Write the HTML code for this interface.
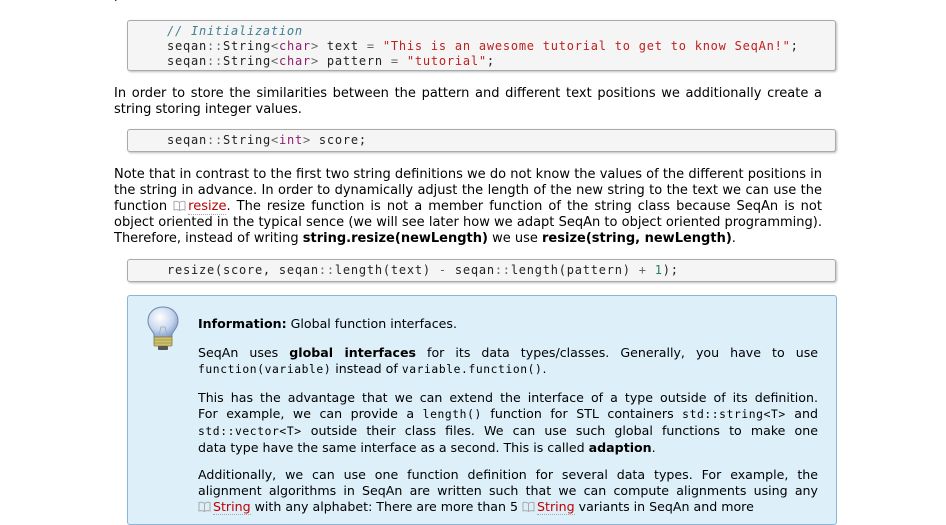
<!DOCTYPE html>
<html><head><meta charset="utf-8"><style>
body{margin:0;width:946px;height:510px;overflow:hidden;background:#fff;font-family:"DejaVu Sans",sans-serif;font-size:13px;color:#000;position:relative}
p{margin:0;position:absolute;left:114px;width:708px;line-height:16px;text-align:justify}
.code{position:absolute;left:127px;width:709px;background:#f5f5f5;border:1px solid #aaa;border-radius:3px;box-shadow:1px 1px 2px #bbb;font-family:"DejaVu Sans Mono",monospace;font-size:12px;letter-spacing:0.77px;line-height:15px;padding-left:39px;box-sizing:border-box;white-space:pre;color:#222}
.cm{color:#408090;font-style:italic}.k{color:#902070}.s{color:#c02020}.o{color:#666}.n{color:#208050}
.lnk{color:#c00000;border-bottom:1px dotted #aaa}
.bk{display:inline-block;width:13px;height:11px;vertical-align:-1px;margin-right:2px}
.info{position:absolute;left:127px;top:295px;width:710px;height:230px;background:#ddeff9;border:1px solid #8ab4d8;border-radius:3px;box-sizing:border-box}
.ip{left:198px;width:620px;font-size:12.6px}
.ip span.l{display:block;white-space:nowrap;text-align:justify;text-align-last:justify}
.ip span.e{display:block;white-space:nowrap}
tt{font-family:"DejaVu Sans Mono",monospace;font-size:11.3px;letter-spacing:0.6px}
</style></head><body>
<p style="top:-13px">pattern.</p>
<div class="code" style="top:20px;height:51px;padding-top:3px"><span class="cm">// Initialization</span>
seqan<span class="o">::</span>String<span class="o">&lt;</span><span class="k">char</span><span class="o">&gt;</span> text <span class="o">=</span> <span class="s">"This is an awesome tutorial to get to know SeqAn!"</span>;
seqan<span class="o">::</span>String<span class="o">&lt;</span><span class="k">char</span><span class="o">&gt;</span> pattern <span class="o">=</span> <span class="s">"tutorial"</span>;</div>
<p style="top:86px">In order to store the similarities between the pattern and different text positions we additionally create a string storing integer values.</p>
<div class="code" style="top:129px;height:23px;padding-top:3px">seqan<span class="o">::</span>String<span class="o">&lt;</span><span class="k">int</span><span class="o">&gt;</span> score;</div>
<p style="top:167px">Note that in contrast to the first two string definitions we do not know the values of the different positions in the string in advance. In order to dynamically adjust the length of the new string to the text we can use the function <svg class="bk" viewBox="0 0 13 11"><path d="M6.5 2.5C5 1 3 1 1 1.5V10C3 9.5 5 9.5 6.5 10.5C8 9.5 10 9.5 12 10V1.5C10 1 8 1 6.5 2.5V10.5" fill="none" stroke="#aaa"/></svg><span class="lnk">resize</span>. The resize function is not a member function of the string class because SeqAn is not object oriented in the typical sence (we will see later how we adapt SeqAn to object oriented programming). Therefore, instead of writing <b>string.resize(newLength)</b> we use <b>resize(string, newLength)</b>.</p>
<div class="code" style="top:259px;height:23px;padding-top:3px">resize(score, seqan<span class="o">::</span>length(text) <span class="o">-</span> seqan<span class="o">::</span>length(pattern) <span class="o">+</span> <span class="n">1</span>);</div>
<div class="info">
<svg style="position:absolute;left:17px;top:9px" width="36" height="50" viewBox="0 0 36 50"><defs><radialGradient id="g" cx=".4" cy=".35" r=".7"><stop offset="0" stop-color="#fff"/><stop offset=".6" stop-color="#c8d8ee"/><stop offset="1" stop-color="#7f9cc8"/></radialGradient></defs><path d="M18 2C9 2 3 8 3 16c0 6 4 9 6 13v3h18v-3c2-4 6-7 6-13C33 8 27 2 18 2z" fill="url(#g)" stroke="#7088aa"/><path d="M14 30l2-8h4l2 8" fill="none" stroke="#a0a8b0" stroke-width=".8"/><rect x="9" y="32" width="18" height="9" rx="1" fill="#cfc070" stroke="#8a7a30" stroke-width=".8"/><path d="M9 35h18M9 38h18" stroke="#8a7a30" stroke-width=".6"/><rect x="13" y="41" width="10" height="4" rx="1" fill="#555"/></svg>
</div>
<p class="ip" style="top:316px"><b>Information:</b> Global function interfaces.</p>
<p class="ip" style="top:345px"><span class="l">SeqAn uses <b>global interfaces</b> for its data types/classes. Generally, you have to use</span><span class="e"><tt>function(variable)</tt> instead of <tt>variable.function()</tt>.</span></p>
<p class="ip" style="top:390px"><span class="l">This has the advantage that we can extend the interface of a type outside of its definition.</span><span class="l">For example, we can provide a <tt>length()</tt> function for STL containers <tt>std::string&lt;T&gt;</tt> and</span><span class="l"><tt>std::vector&lt;T&gt;</tt> outside their class files. We can use such global functions to make one</span><span class="e">data type have the same interface as a second. This is called <b>adaption</b>.</span></p>
<p class="ip" style="top:467px"><span class="l">Additionally, we can use one function definition for several data types. For example, the</span><span class="l">alignment algorithms in SeqAn are written such that we can compute alignments using any</span><span class="e"><svg class="bk" viewBox="0 0 13 11"><path d="M6.5 2.5C5 1 3 1 1 1.5V10C3 9.5 5 9.5 6.5 10.5C8 9.5 10 9.5 12 10V1.5C10 1 8 1 6.5 2.5V10.5" fill="none" stroke="#aaa"/></svg><span class="lnk">String</span> with any alphabet: There are more than 5 <svg class="bk" viewBox="0 0 13 11"><path d="M6.5 2.5C5 1 3 1 1 1.5V10C3 9.5 5 9.5 6.5 10.5C8 9.5 10 9.5 12 10V1.5C10 1 8 1 6.5 2.5V10.5" fill="none" stroke="#aaa"/></svg><span class="lnk">String</span> variants in SeqAn and more</span></p>
</body></html>
